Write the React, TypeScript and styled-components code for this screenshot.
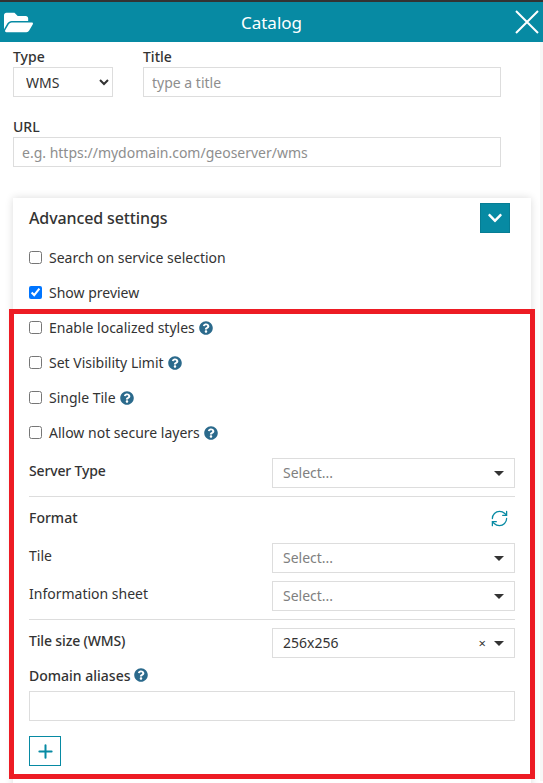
import styled, { createGlobalStyle } from 'styled-components';
import { FaFolderOpen, FaQuestionCircle, FaChevronDown } from 'react-icons/fa';
import { RefreshCw, Plus } from 'lucide-react';

const GlobalStyle = createGlobalStyle`
  html, body {
    margin: 0;
    padding: 0;
    background: #fff;
  }

  body {
    font-family: "Noto Sans", "Open Sans", sans-serif;
    font-size: 14px;
    color: #333;
  }

  * {
    box-sizing: border-box;
  }
`;

const Page = styled.div`
  position: relative;
  width: 543px;
  height: 783px;
  overflow: hidden;
  border-top: 2px solid #333;
`;

const Header = styled.header`
  height: 40px;
  background: #078aa3;
  color: #fff;
  display: flex;
  align-items: center;
  justify-content: space-between;
  padding: 0 4px;
`;

const HeaderTitle = styled.h1`
  margin: 0;
  font-size: 17px;
  font-weight: 400;
`;

const CloseIcon = styled.svg`
  width: 24px;
  height: 24px;
  margin-left: 5px;
`;

const Body = styled.div`
  height: 739px;
  padding: 7px 12px 0 13px;
  border-right: 3px solid #f7f7f7;
`;

const FormRow = styled.div`
  display: flex;
  gap: 30px;
  width: 488px;
  margin-bottom: 22px;
`;

const Field = styled.div<{ $grow?: boolean }>`
  display: flex;
  flex-direction: column;
  flex: ${(p) => (p.$grow ? 1 : '0 0 100px')};
`;

const TopLabel = styled.label`
  font-size: 14px;
  font-weight: 500;
  line-height: 16px;
  padding-bottom: 2px;
`;

const TextInput = styled.input`
  width: 100%;
  height: 30px;
  border: 1px solid #ddd;
  border-radius: 0;
  padding: 0 8px;
  font: 14px "Noto Sans", sans-serif;
  color: #333;
  outline: none;

  &::placeholder {
    color: #8e8e8e;
  }
`;

const NativeSelect = styled.select`
  width: 100%;
  height: 30px;
  border: 1px solid #ddd;
  border-radius: 0;
  background: #fff;
  padding: 0 8px;
  font: 14px "Noto Sans", sans-serif;
  color: #333;
`;

const Card = styled.section`
  width: 518px;
  margin-top: 31px;
  padding: 5px 16px 0;
  background: #fff;
  box-shadow: 0 0 8px rgba(0, 0, 0, 0.14);
  height: 600px;
`;

const CardHead = styled.div`
  display: flex;
  align-items: center;
  justify-content: space-between;
  height: 30px;
  padding-right: 5px;
  margin-bottom: 7px;
`;

const CardTitle = styled.h2`
  margin: 0;
  font-size: 16px;
  font-weight: 500;
  letter-spacing: -0.12px;
`;

const ToggleButton = styled.button`
  width: 30px;
  height: 30px;
  border: 1px solid #067d94;
  background: #078aa3;
  color: #fff;
  display: flex;
  align-items: center;
  justify-content: center;
  padding: 0;
`;

const CheckRow = styled.label`
  display: flex;
  align-items: center;
  height: 35px;
  font-size: 14px;
`;

const Check = styled.input`
  width: 13px;
  height: 13px;
  margin: 0 7px 0 0;
`;

const HelpIcon = styled(FaQuestionCircle)`
  color: #2b6a8c;
  font-size: 14px;
  margin-left: 4px;
`;

const SelectRow = styled.div<{ $top?: number; $bottom?: number }>`
  display: flex;
  align-items: center;
  justify-content: space-between;
  height: 30px;
  margin-top: ${(p) => p.$top ?? 0}px;
  margin-bottom: ${(p) => p.$bottom ?? 0}px;
`;

const RowLabel = styled.span<{ $strong?: boolean }>`
  font-weight: ${(p) => (p.$strong ? 500 : 400)};
  letter-spacing: ${(p) => (p.$strong ? '-0.15px' : '0')};
  padding-bottom: 6px;
`;

const FakeSelect = styled.div`
  width: 243px;
  height: 30px;
  border: 1px solid #ddd;
  display: flex;
  align-items: center;
  padding: 0 10px;
  font-size: 14px;
`;

const SelectValue = styled.span<{ $placeholder?: boolean }>`
  flex: 1;
  padding-bottom: 2px;
  color: ${(p) => (p.$placeholder ? '#808080' : '#333')};
`;

const Clear = styled.span`
  font-size: 13px;
  color: #333;
  margin-right: 8px;
`;

const Caret = styled.span`
  width: 0;
  height: 0;
  border-left: 5px solid transparent;
  border-right: 5px solid transparent;
  border-top: 5px solid #333;
`;

const Divider = styled.hr`
  border: 0;
  border-top: 1px solid #ddd;
  margin: 8px 0 0;
  height: 0;
`;

const FormatHead = styled.div`
  display: flex;
  align-items: center;
  justify-content: space-between;
  height: 43px;
  padding-right: 6px;
  font-weight: 500;
  color: #333;
  margin-bottom: 3px;
`;

const FormatLabel = styled.span`
  padding-bottom: 2px;
`;

const DomainLabel = styled.div`
  display: flex;
  align-items: center;
  height: 18px;
  margin: 8px 0 7px;
  font-weight: 500;
`;

const AddButton = styled.button`
  display: flex;
  align-items: center;
  justify-content: center;
  width: 32px;
  height: 30px;
  margin-top: 15px;
  padding: 0;
  border: 1px solid #078aa3;
  background: #fff;
  color: #078aa3;
`;

const Highlight = styled.div`
  position: absolute;
  left: 9px;
  top: 307px;
  width: 526px;
  height: 470px;
  border: 5px solid #ed1c24;
  pointer-events: none;
`;

const Select = ({ value, clearable }: { value?: string; clearable?: boolean }) => (
  <FakeSelect>
    <SelectValue $placeholder={!value}>{value ?? 'Select...'}</SelectValue>
    {clearable && <Clear>×</Clear>}
    <Caret />
  </FakeSelect>
);

const checks = [
  { label: 'Search on service selection' },
  { label: 'Show preview', checked: true },
  { label: 'Enable localized styles', help: true },
  { label: 'Set Visibility Limit', help: true },
  { label: 'Single Tile', help: true },
  { label: 'Allow not secure layers', help: true },
];

const App = () => (
  <Page>
    <GlobalStyle />
    <Header>
      <FaFolderOpen size={29} />
      <HeaderTitle>Catalog</HeaderTitle>
      <CloseIcon viewBox="0 0 24 24">
        <path d="M1 1L23 23M23 1L1 23" stroke="#fff" strokeWidth="2" fill="none" />
      </CloseIcon>
    </Header>
    <Body>
      <FormRow>
        <Field>
          <TopLabel>Type</TopLabel>
          <NativeSelect defaultValue="WMS">
            <option>WMS</option>
          </NativeSelect>
        </Field>
        <Field $grow>
          <TopLabel>Title</TopLabel>
          <TextInput placeholder="type a title" />
        </Field>
      </FormRow>
      <FormRow>
        <Field $grow>
          <TopLabel>URL</TopLabel>
          <TextInput placeholder="e.g. https://mydomain.com/geoserver/wms" />
        </Field>
      </FormRow>
      <Card>
        <CardHead>
          <CardTitle>Advanced settings</CardTitle>
          <ToggleButton>
            <FaChevronDown size={16} />
          </ToggleButton>
        </CardHead>
        {checks.map((c) => (
          <CheckRow key={c.label}>
            <Check type="checkbox" defaultChecked={c.checked} />
            {c.label}
            {c.help && <HelpIcon />}
          </CheckRow>
        ))}
        <SelectRow $top={8}>
          <RowLabel $strong>Server Type</RowLabel>
          <Select />
        </SelectRow>
        <Divider />
        <FormatHead>
          <FormatLabel>Format</FormatLabel>
          <RefreshCw size={19} strokeWidth={1.6} color="#078aa3" />
        </FormatHead>
        <SelectRow $bottom={8}>
          <RowLabel>Tile</RowLabel>
          <Select />
        </SelectRow>
        <SelectRow>
          <RowLabel>Information sheet</RowLabel>
          <Select />
        </SelectRow>
        <Divider />
        <SelectRow $top={8}>
          <RowLabel $strong>Tile size (WMS)</RowLabel>
          <Select value="256x256" clearable />
        </SelectRow>
        <DomainLabel>
          Domain aliases
          <HelpIcon />
        </DomainLabel>
        <TextInput />
        <AddButton>
          <Plus size={21} strokeWidth={2.3} />
        </AddButton>
      </Card>
    </Body>
    <Highlight />
  </Page>
);

export default App;
